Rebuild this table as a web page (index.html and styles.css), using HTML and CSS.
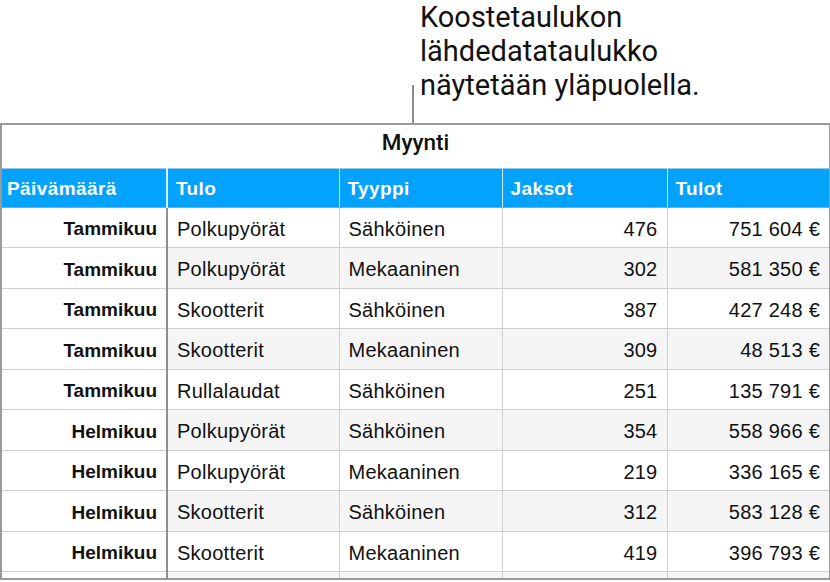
FILE: index.html
```html
<!DOCTYPE html>
<html lang="fi">
<head>
<meta charset="utf-8">
<title>Myynti</title>
<link rel="stylesheet" href="styles.css">
</head>
<body>
<div class="callout">
  <div class="leader"></div>
  <p class="callout-text">Koostetaulukon<br>lähdedatataulukko<br>näytetään yläpuolella.</p>
</div>
<table class="sheet">
  <colgroup>
    <col class="c1"><col class="c2"><col class="c3"><col class="c4"><col class="c5">
  </colgroup>
  <thead>
    <tr class="title-row"><th colspan="5">Myynti</th></tr>
    <tr class="head-row">
      <th class="hc">Päivämäärä</th><th>Tulo</th><th>Tyyppi</th><th>Jaksot</th><th>Tulot</th>
    </tr>
  </thead>
  <tbody>
    <tr><th>Tammikuu</th><td>Polkupyörät</td><td>Sähköinen</td><td class="num">476</td><td class="num">751 604 €</td></tr>
    <tr><th>Tammikuu</th><td>Polkupyörät</td><td>Mekaaninen</td><td class="num">302</td><td class="num">581 350 €</td></tr>
    <tr><th>Tammikuu</th><td>Skootterit</td><td>Sähköinen</td><td class="num">387</td><td class="num">427 248 €</td></tr>
    <tr><th>Tammikuu</th><td>Skootterit</td><td>Mekaaninen</td><td class="num">309</td><td class="num">48 513 €</td></tr>
    <tr><th>Tammikuu</th><td>Rullalaudat</td><td>Sähköinen</td><td class="num">251</td><td class="num">135 791 €</td></tr>
    <tr><th>Helmikuu</th><td>Polkupyörät</td><td>Sähköinen</td><td class="num">354</td><td class="num">558 966 €</td></tr>
    <tr><th>Helmikuu</th><td>Polkupyörät</td><td>Mekaaninen</td><td class="num">219</td><td class="num">336 165 €</td></tr>
    <tr><th>Helmikuu</th><td>Skootterit</td><td>Sähköinen</td><td class="num">312</td><td class="num">583 128 €</td></tr>
    <tr><th>Helmikuu</th><td>Skootterit</td><td>Mekaaninen</td><td class="num">419</td><td class="num">396 793 €</td></tr>
    <tr class="stub"><th></th><td></td><td></td><td></td><td></td></tr>
  </tbody>
</table>
</body>
</html>
```
FILE: styles.css
```css
html, body {
  margin: 0;
  padding: 0;
  background: #ffffff;
}
body {
  width: 830px;
  height: 582px;
  overflow: hidden;
  font-family: "Liberation Sans", Arial, sans-serif;
  color: #111;
}
.callout {
  display: flex;
  align-items: flex-end;
  padding-left: 412px;
  height: 123px;
}
.leader {
  width: 2px;
  height: 38px;
  background: #8c8c8c;
  flex: none;
}
.callout-text {
  margin: 0 0 21px 6px;
  font-family: Roboto, "Liberation Sans", sans-serif;
  font-size: 29px;
  line-height: 34px;
  color: #111;
}
.sheet {
  border-collapse: collapse;
  table-layout: fixed;
  width: 829px;
  border: 2px solid #9a9a9a;
  font-size: 20px;
}
.c1 { width: 166px; }
.c2 { width: 172px; }
.c3 { width: 163px; }
.c4 { width: 165px; }
.c5 { width: 163px; }
.title-row th {
  height: 44px;
  font-family: Roboto, "Liberation Sans", sans-serif;
  font-weight: 500;
  font-size: 22.5px;
  line-height: 1;
  text-align: center;
  background: #fff;
  border-bottom: 1px solid #9ac9ee;
  padding: 0 0 8px 0;
  box-sizing: border-box;
  color: #111;
}
.head-row th {
  height: 39px;
  box-sizing: border-box;
  background: #03a2fd;
  color: #fff;
  font-weight: bold;
  font-size: 19px;
  line-height: 1;
  letter-spacing: 0.4px;
  text-align: left;
  padding: 1px 8px 0 8px;
  border-left: 1px solid #d6eefc;
  border-bottom: 1px solid #a0a0a0;
}
.head-row th.hc {
  padding-left: 5px;
  border-left: none;
  border-right: 2px solid #d6eefc;
}
tbody tr { height: 40.5px; }
tbody th, tbody td {
  padding: 3px 9px 0 9px;
  border: 1px solid #cfcfcf;
  white-space: nowrap;
  line-height: 1;
}
tbody th {
  text-align: right;
  font-weight: bold;
  font-size: 19px;
  background: #fff;
  border-right: 2px solid #8f8f8f;
}
tbody td {
  text-align: left;
  font-weight: normal;
  letter-spacing: 0.25px;
}
tbody tr:nth-child(even) td { background: #f5f5f5; }
td.num { text-align: right; }
tbody tr.stub { height: 7px; }
tbody tr.stub th, tbody tr.stub td { padding: 0 9px; }
```
